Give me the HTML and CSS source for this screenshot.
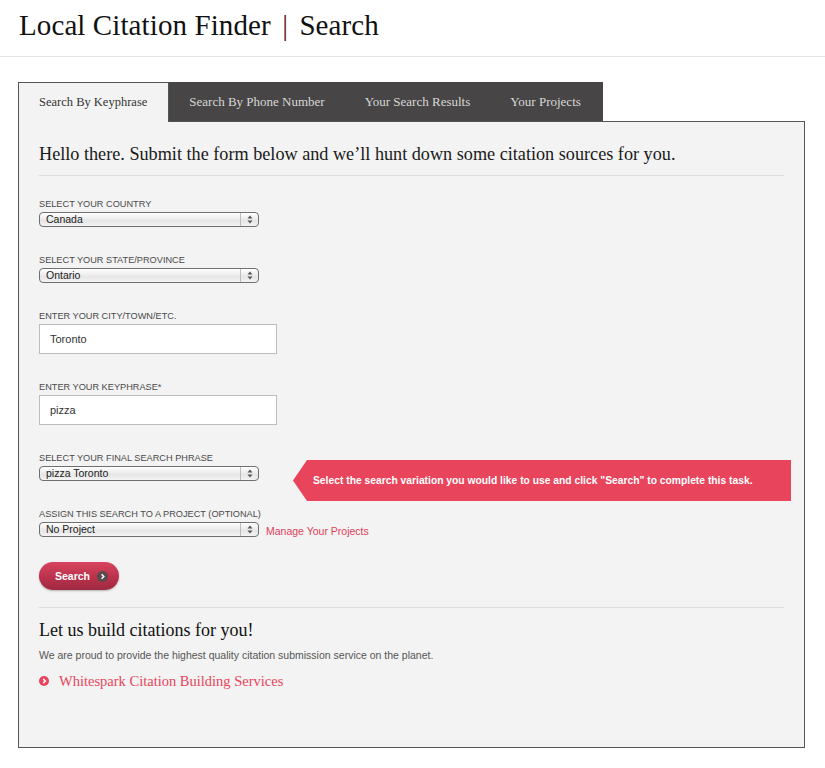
FILE: index.html
```html
<!DOCTYPE html>
<html>
<head>
<meta charset="utf-8">
<link rel="stylesheet" href="styles.css">
</head>
<body>
<header class="site-header">
  <h1 class="title">Local Citation Finder <span class="pipe">|</span> Search</h1>
</header>

<div class="wrap">
  <ul class="tabs">
    <li class="tab active">Search By Keyphrase</li>
    <li class="tab">Search By Phone Number</li>
    <li class="tab">Your Search Results</li>
    <li class="tab">Your Projects</li>
  </ul>
  <div class="panel">
    <h2 class="intro">Hello there. Submit the form below and we’ll hunt down some citation sources for you.</h2>

    <div class="field">
      <label class="lbl">SELECT YOUR COUNTRY</label>
      <div class="select"><span class="sel-text">Canada</span><span class="sel-arrows"><svg width="6" height="9" viewBox="0 0 6 9"><path d="M3 0.5L5.5 3.5H0.5Z M3 8.5L5.5 5.5H0.5Z" fill="#555"/></svg></span></div>
    </div>

    <div class="field">
      <label class="lbl">SELECT YOUR STATE/PROVINCE</label>
      <div class="select"><span class="sel-text">Ontario</span><span class="sel-arrows"><svg width="6" height="9" viewBox="0 0 6 9"><path d="M3 0.5L5.5 3.5H0.5Z M3 8.5L5.5 5.5H0.5Z" fill="#555"/></svg></span></div>
    </div>

    <div class="field">
      <label class="lbl">ENTER YOUR CITY/TOWN/ETC.</label>
      <div class="input">Toronto</div>
    </div>

    <div class="field">
      <label class="lbl">ENTER YOUR KEYPHRASE*</label>
      <div class="input">pizza</div>
    </div>

    <div class="field field-tip">
      <label class="lbl">SELECT YOUR FINAL SEARCH PHRASE</label>
      <div class="select"><span class="sel-text">pizza Toronto</span><span class="sel-arrows"><svg width="6" height="9" viewBox="0 0 6 9"><path d="M3 0.5L5.5 3.5H0.5Z M3 8.5L5.5 5.5H0.5Z" fill="#555"/></svg></span></div>
      <div class="callout">Select the search variation you would like to use and click "Search" to complete this task.</div>
    </div>

    <div class="field">
      <label class="lbl">ASSIGN THIS SEARCH TO A PROJECT (OPTIONAL)</label>
      <div class="row">
        <div class="select"><span class="sel-text">No Project</span><span class="sel-arrows"><svg width="6" height="9" viewBox="0 0 6 9"><path d="M3 0.5L5.5 3.5H0.5Z M3 8.5L5.5 5.5H0.5Z" fill="#555"/></svg></span></div>
        <a class="manage">Manage Your Projects</a>
      </div>
    </div>

    <button class="btn">Search <span class="btn-ico"><svg width="11" height="11" viewBox="0 0 11 11"><circle cx="5.5" cy="5.5" r="5.5" fill="#5a4a4e"/><path d="M4.6 3.3L6.8 5.5L4.6 7.7" stroke="#fff" stroke-width="1.5" fill="none"/></svg></span></button>

    <div class="promo">
      <h3 class="promo-title">Let us build citations for you!</h3>
      <p class="promo-text">We are proud to provide the highest quality citation submission service on the planet.</p>
      <a class="promo-link"><svg class="bullet" width="10" height="10" viewBox="0 0 10 10"><circle cx="5" cy="5" r="5" fill="#e8445c"/><path d="M4.2 2.9L6.3 5L4.2 7.1" stroke="#fff" stroke-width="1.5" fill="none"/></svg>Whitespark Citation Building Services</a>
    </div>
  </div>
</div>
</body>
</html>
```

FILE: styles.css
```css
html, body {
  margin: 0;
  padding: 0;
  background: #fff;
}

body {
  font-family: "Liberation Sans", Arial, sans-serif;
  color: #333;
}

.site-header {
  height: 56px;
  border-bottom: 1px solid #e3e3e3;
  padding-left: 19px;
  box-sizing: content-box;
}

.title {
  margin: 0;
  padding-top: 8px;
  font-family: "Liberation Serif", "Times New Roman", serif;
  font-weight: normal;
  font-size: 29px;
  line-height: 34px;
  color: #111;
  letter-spacing: 0.1px;
}

.pipe {
  color: #5e1818;
  font-weight: normal;
  margin: 0 4px;
}

.wrap {
  margin: 25px 0 0 18px;
  width: 787px;
}

.tabs {
  list-style: none;
  margin: 0;
  padding: 0;
  display: flex;
  width: 585px;
  background: #474545;
  height: 39px;
  position: relative;
  z-index: 1;
}

.tab {
  font-family: "Liberation Serif", "Times New Roman", serif;
  font-size: 13px;
  color: #d8d8d8;
  padding: 0 20px;
  line-height: 39px;
  height: 39px;
  white-space: nowrap;
}

.tab.active {
  background: #f3f3f3;
  color: #333;
  font-size: 12.5px;
  border: 1px solid #555;
  border-bottom: none;
  height: 40px;
  line-height: 38px;
  padding: 0 21px 0 20px;
  box-sizing: border-box;
}

.panel {
  background: #f3f3f3;
  border: 1px solid #555;
  padding: 20px 20px 0 20px;
  height: 627px;
  box-sizing: border-box;
  position: relative;
}

.intro {
  margin: 0;
  font-family: "Liberation Serif", "Times New Roman", serif;
  font-weight: normal;
  font-size: 18.2px;
  line-height: 24px;
  color: #1a1a1a;
  padding-bottom: 9px;
  border-bottom: 1px solid #dedede;
  margin-bottom: 23px;
}

.field {
  margin-bottom: 28px;
}

.field-tip {
  position: relative;
}

.lbl {
  display: block;
  font-size: 9.2px;
  line-height: 10px;
  color: #4a4a4a;
  margin-bottom: 3px;
}

.select {
  display: flex;
  width: 220px;
  height: 15px;
  box-sizing: border-box;
  border: 1px solid #6f6f6f;
  border-radius: 4px;
  background: linear-gradient(#ffffff, #e6e6e6 60%, #f4f4f4);
  box-shadow: inset 0 1px 0 #fff;
}

.sel-text {
  flex: 1;
  font-size: 10.5px;
  line-height: 13px;
  color: #222;
  padding-left: 6px;
}

.sel-arrows {
  width: 17px;
  border-left: 1px solid #bdbdbd;
  display: flex;
  align-items: center;
  justify-content: center;
}

.input {
  width: 238px;
  height: 30px;
  box-sizing: border-box;
  border: 1px solid #bcbcbc;
  background: #fff;
  font-size: 11px;
  line-height: 28px;
  padding-left: 10px;
  color: #333;
}

.callout {
  position: absolute;
  left: 254px;
  top: 7px;
  width: 498px;
  height: 41px;
  box-sizing: border-box;
  background: #e8445c;
  clip-path: polygon(14px 0, 100% 0, 100% 100%, 14px 100%, 0 50%);
  color: #fff;
  font-weight: bold;
  font-size: 10.3px;
  line-height: 41px;
  padding-left: 20px;
  white-space: nowrap;
}

.row {
  display: flex;
  align-items: center;
  gap: 7px;
}

.manage {
  font-size: 10.5px;
  color: #e0405a;
  padding-top: 2px;
}

.btn {
  display: flex;
  align-items: center;
  gap: 7px;
  width: 80px;
  height: 28px;
  border: none;
  border-radius: 14px;
  background: linear-gradient(#d8445f, #b8304a 60%, #9e2a41);
  box-shadow: 0 1px 2px rgba(0,0,0,0.25);
  color: #fff;
  font-family: "Liberation Sans", Arial, sans-serif;
  font-weight: bold;
  font-size: 10.5px;
  padding: 0 0 0 16px;
  margin-top: -3px;
}

.btn-ico {
  display: flex;
}

.promo {
  margin-top: 17px;
  border-top: 1px solid #dedede;
  padding-top: 10px;
}

.promo-title {
  margin: 0;
  font-family: "Liberation Serif", "Times New Roman", serif;
  font-weight: normal;
  font-size: 18px;
  line-height: 24px;
  color: #111;
}

.promo-text {
  margin: 6px 0 0 0;
  font-size: 10.5px;
  line-height: 14px;
  color: #555;
}

.promo-link {
  display: flex;
  align-items: center;
  gap: 10px;
  margin-top: 9px;
  font-family: "Liberation Serif", "Times New Roman", serif;
  font-size: 14.5px;
  line-height: 20px;
  color: #e8445c;
}

.bullet {
  flex: none;
}
```
